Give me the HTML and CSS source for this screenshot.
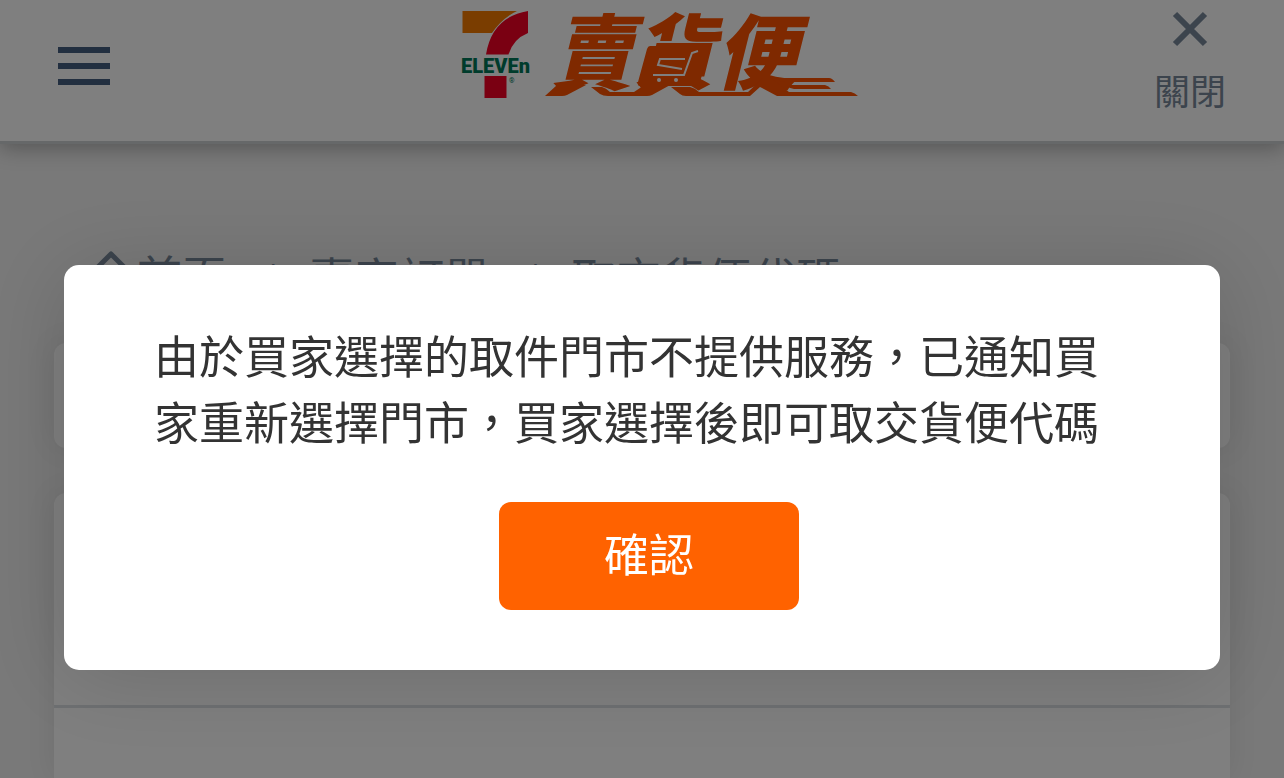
FILE: index.html
```html
<!DOCTYPE html>
<html lang="zh-Hant">
<head>
  <meta charset="UTF-8" />
  <meta name="viewport" content="width=device-width, initial-scale=1.0"/>
  <title>賣貨便</title>
  <link rel="stylesheet" href="styles.css">
</head>
<body>
  <header class="header">
    <button class="menu" type="button" aria-label="選單">
      <span></span>
      <span></span>
      <span></span>
    </button>

    <a class="logo" href="#" aria-label="7-ELEVEN 賣貨便">
      <svg viewBox="426 11 432 88" width="432" height="88">
        <path fill="#f47a00" d="M462.5 11H517Q502 18 492 33H462.5Z"/>
        <path fill="#f40024" d="M528 11V33Q513 39 508.500 54.500H486Q492 17 528 11Z"/>
        <path fill="#f40024" d="M484.500 76H506.500V98H484.500Z"/>
        <text class="logo-eleven" x="461" y="73">ELEVEn</text>
        <text class="logo-reg" x="509" y="83">®</text>
        <g fill="#ff5200">
          <text class="logo-name" x="551" y="83">賣貨便</text>
          <path d="M545 96L557 85H586L567 95Q565 96 562 96Z"/>
          <path d="M591 87H602Q606 88 610 92H634L646 84H672L652 95Q650 96 647 96H608Q603 96 600 94Z"/>
          <path d="M671 87H690Q695 88 699 92H748L764 77H770L776 82L789 92H851Q855 93 858 96H777L760 87L750 96H686Q682 96 680 94Z"/>
          <path d="M776 78H829Q832 78 835 82H785Q780 82 776 78Z"/>
          <path d="M786 85H825Q829 86 831 89H794Q789 88 786 85Z"/>
          <path d="M650 46H706Q710 46 709 50L700 82Q699 86 695 86H640Q637 86 638 82L647 49Q648 46 650 46Z"/>
        </g>
        <g fill="none" stroke="#fff" stroke-width="2">
          <path d="M698 51L692 53L684 75H653M685 59H660L658 65L682 69"/>
        </g>
        <circle cx="659" cy="80" r="2" fill="#fff"/>
        <circle cx="676" cy="80" r="2" fill="#fff"/>
      </svg>
    </a>

    <a class="close" href="#">
      <svg viewBox="0 0 36 36" width="36" height="36">
        <path d="M3 3L33 33M33 3L3 33" stroke="currentColor" stroke-width="6"/>
      </svg>
      <span>關閉</span>
    </a>
  </header>

  <main class="content">
    <nav class="breadcrumb">
      <a class="home" href="#">
        <svg viewBox="0 0 44 44" width="44" height="44">
          <path d="M4 22L22 4L40 22M9 18V40H35V18" fill="none" stroke="currentColor" stroke-width="5" stroke-linejoin="round"/>
        </svg>
        <span>首頁</span>
      </a>
      <span class="slash">/</span>
      <a href="#">賣家訂單</a>
      <span class="slash">/</span>
      <span>取交貨便代碼</span>
    </nav>

    <section class="card card-small"></section>
    <section class="card card-list">
      <div class="card-head"></div>
      <div class="card-body"></div>
    </section>
  </main>

  <div class="overlay">
    <div class="modal" role="alertdialog" aria-modal="true" aria-describedby="message">
      <p id="message">由於買家選擇的取件門市不提供服務，已通知買<br>家重新選擇門市，買家選擇後即可取交貨便代碼</p>
      <button class="confirm" type="button">確認</button>
    </div>
  </div>
</body>
</html>
```

FILE: styles.css
```css
* {
  box-sizing: border-box;
}

body {
  margin: 0;
  background: #f2f2f2;
  color: #78889a;
  font-family: "Noto Sans CJK TC", sans-serif;
  font-size: 45px;
}

a {
  color: inherit;
  text-decoration: none;
}

button {
  border: none;
  font-family: inherit;
  cursor: pointer;
}

svg {
  display: block;
  overflow: visible;
}

.header {
  position: relative;
  display: grid;
  grid-template-columns: 1fr auto 1fr;
  align-items: start;
  padding: 11px 58px 28px;
  background: #fff;
  border-bottom: 3px solid #ccd0d2;
  box-shadow: 0 4px 20px rgba(0, 0, 0, 0.3);
}

.menu {
  display: flex;
  flex-direction: column;
  gap: 10px;
  width: 52px;
  margin-top: 36px;
  padding: 0;
  background: none;
}

.menu span {
  height: 6px;
  background: #445e80;
}

.logo-eleven {
  fill: #007858;
  font-family: Roboto, "Liberation Sans", sans-serif;
  font-size: 20px;
  font-weight: 900;
}

.logo-reg {
  fill: #007858;
  font-family: Roboto, "Liberation Sans", sans-serif;
  font-size: 7px;
}

.logo-name {
  font-size: 82px;
  font-weight: 900;
  font-style: italic;
}

.close {
  display: flex;
  flex-direction: column;
  align-items: center;
  justify-self: end;
  gap: 18px;
  font-size: 36px;
  line-height: 48px;
}

.content {
  padding: 98px 54px 0;
}

.breadcrumb {
  display: flex;
  align-items: center;
  gap: 34px;
  margin-bottom: 31px;
  padding-left: 35px;
  line-height: 66px;
}

.home {
  display: flex;
  align-items: center;
  gap: 4px;
  margin-bottom: 4px;
}

.home svg {
  margin-bottom: 6px;
}

.slash {
  font-size: 36px;
}

.card {
  margin-bottom: 45px;
  background: #fff;
  border-radius: 12px;
  box-shadow: 0 0 30px rgba(0, 0, 0, 0.08);
}

.card-small {
  height: 105px;
}

.card-list {
  margin-bottom: 0;
  border-radius: 12px 12px 0 0;
}

.card-head {
  height: 215px;
  border-bottom: 3px solid #dce0e4;
}

.card-body {
  height: 70px;
}

.overlay {
  position: fixed;
  inset: 0;
  display: flex;
  align-items: flex-start;
  padding: 265px 64px 0;
  background: rgba(0, 0, 0, 0.5);
}

.modal {
  flex: 1;
  padding: 57px 76px 60px 90px;
  background: #fff;
  border-radius: 15px;
  box-shadow: 0 6px 90px rgba(0, 0, 0, 0.15);
}

.modal p {
  margin: 0 0 48px;
  color: #333;
  line-height: 66px;
}

.confirm {
  display: block;
  width: 300px;
  margin: 0 auto;
  padding: 18px 0 24px;
  background: #ff6200;
  color: #fff;
  font-size: 45px;
  line-height: 66px;
  border-radius: 12px;
}
```
